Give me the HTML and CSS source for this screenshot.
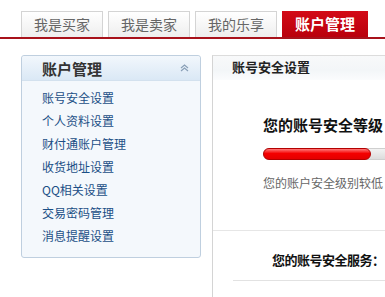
FILE: index.html
```html
<!DOCTYPE html>
<html lang="zh-CN">
  <head>
    <meta charset="utf-8">
    <title>账户管理</title>
    <link rel="stylesheet" href="styles.css">
  </head>
  <body>
    <div class="tabs">
      <a class="tab" href="#">我是买家</a>
      <a class="tab" href="#">我是卖家</a>
      <a class="tab" href="#">我的乐享</a>
      <a class="tab active" href="#">账户管理</a>
    </div>
    <div class="main">
      <div class="side">
        <div class="side-head">
          <span>账户管理</span>
          <svg class="fold" width="9" height="8" viewBox="0 0 9 8">
            <path d="M1 4 L4.5 1 L8 4 M1 7 L4.5 4 L8 7" fill="none" stroke="#8aa0b8" stroke-width="1.2"/>
          </svg>
        </div>
        <ul class="side-list">
          <li><a href="#">账号安全设置</a></li>
          <li><a href="#">个人资料设置</a></li>
          <li><a href="#">财付通账户管理</a></li>
          <li><a href="#">收货地址设置</a></li>
          <li><a href="#">QQ相关设置</a></li>
          <li><a href="#">交易密码管理</a></li>
          <li><a href="#">消息提醒设置</a></li>
        </ul>
      </div>
      <div class="panel">
        <div class="panel-head">账号安全设置</div>
        <div class="level">
          <div class="level-title">您的账号安全等级</div>
          <div class="bar"><div class="bar-fill" style="width:106px"></div></div>
          <div class="level-desc">您的账户安全级别较低</div>
        </div>
        <div class="service">
          <div class="service-title">您的账号安全服务：</div>
          <div class="service-line"></div>
        </div>
      </div>
    </div>
  </body>
</html>
```

FILE: styles.css
```css
body {
    margin: 0;
    width: 385px;
    height: 297px;
    overflow: hidden;
    font-family: "Noto Sans CJK SC", "DejaVu Sans", sans-serif;
    background: #fff;
}

a {
    text-decoration: none;
}

.tabs {
    display: flex;
    gap: 5px;
    padding: 11px 0 0 21px;
    border-bottom: 2px solid #a8121b;
    height: 26px;
}

.tab {
    width: 80px;
    height: 25px;
    border: 1px solid #d4d4d4;
    border-bottom: 0;
    background: linear-gradient(#ffffff, #eeeeee);
    color: #666;
    font-size: 14px;
    line-height: 25px;
    text-align: center;
}

.tab.active {
    width: 86px;
    height: 26px;
    border: 0;
    background: linear-gradient(#d30a17, #b9000c);
    color: #fff;
    font-size: 15px;
    font-weight: bold;
    line-height: 26px;
}

.main {
    display: flex;
    gap: 11px;
    padding: 16px 0 0 21px;
}

.side {
    flex: none;
    width: 178px;
    height: 201px;
    border: 1px solid #bfcfdf;
    border-radius: 3px;
    background: #f4f8fc;
}

.side-head {
    display: flex;
    align-items: center;
    justify-content: space-between;
    height: 24px;
    padding: 0 11px 0 20px;
    background: linear-gradient(#f2f7fc, #dae8f5);
    border-bottom: 1px solid #d3e1ee;
    border-radius: 3px 3px 0 0;
    font-size: 15px;
    font-weight: bold;
    color: #333;
}

.side-list {
    list-style: none;
    margin: 0;
    padding: 5px 0 0 20px;
}

.side-list li {
    height: 23px;
    line-height: 23px;
    font-size: 12px;
}

.side-list a {
    color: #1b4f86;
}

.panel {
    flex: 1;
    height: 241px;
    border-top: 1px solid #dcdcdc;
    border-left: 1px solid #d4d4d4;
    background: #fff;
}

.panel-head {
    height: 24px;
    line-height: 22px;
    padding-left: 19px;
    background: linear-gradient(#f8f9fa, #f3f6f8 60%, #fbfcfd);
    font-size: 13px;
    font-weight: bold;
    color: #222;
}

.level {
    padding: 35px 0 38px 50px;
    border-bottom: 1px solid #e6e6e6;
}

.level-title {
    font-size: 15px;
    font-weight: bold;
    line-height: 20px;
    color: #111;
    white-space: nowrap;
}

.bar {
    margin-top: 13px;
    height: 10px;
    border: 1px solid #cfcfcf;
    border-right: 0;
    border-radius: 6px 0 0 6px;
    background: linear-gradient(#f2f2f2, #dcdcdc);
}

.bar-fill {
    height: 10px;
    margin: -1px 0 0 -1px;
    border: 1px solid #b30000;
    border-radius: 6px;
    background: linear-gradient(#ff7a7a, #f40000 45%, #e40000);
}

.level-desc {
    margin-top: 14px;
    font-size: 12px;
    line-height: 18px;
    color: #666;
    white-space: nowrap;
}

.service {
    padding: 20px 0 0 20px;
}

.service-title {
    padding-left: 39px;
    font-size: 13px;
    font-weight: bold;
    line-height: 18px;
    letter-spacing: -0.5px;
    color: #111;
    white-space: nowrap;
}

.service-line {
    margin-top: 11px;
    border-top: 1px solid #e2e2e2;
}
```
